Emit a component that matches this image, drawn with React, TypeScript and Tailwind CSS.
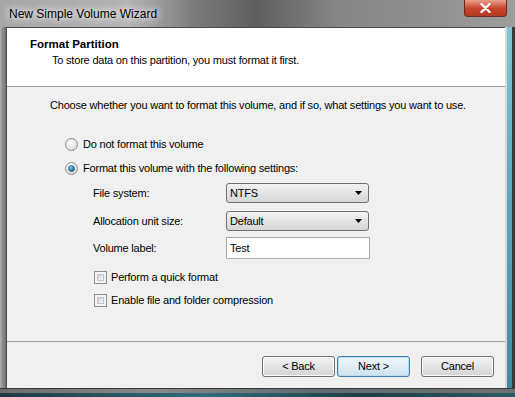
import React from 'react';

function Radio({ checked }: { checked?: boolean }) {
  return (
    <svg width="13" height="13" viewBox="0 0 13 13" className="shrink-0">
      <defs>
        <radialGradient id={checked ? 'rg1' : 'rg0'} cx="0.4" cy="0.35" r="0.7">
          <stop offset="0" stopColor="#ffffff" />
          <stop offset="1" stopColor="#d4d4d4" />
        </radialGradient>
        <radialGradient id="dot" cx="0.4" cy="0.35" r="0.7">
          <stop offset="0" stopColor="#8ad4f2" />
          <stop offset="0.6" stopColor="#2389be" />
          <stop offset="1" stopColor="#0d4f78" />
        </radialGradient>
      </defs>
      <circle cx="6.5" cy="6.5" r="6" fill={checked ? 'url(#rg1)' : 'url(#rg0)'} stroke="#8e8f8f" strokeWidth="1" />
      {checked && <circle cx="6.5" cy="6.5" r="3" fill="url(#dot)" stroke="#10476b" strokeWidth="0.5" />}
    </svg>
  );
}

function Checkbox() {
  return (
    <div className="w-[13px] h-[13px] shrink-0 border border-[#8f8f8f] bg-[#f4f4f4] p-[2px]">
      <div className="w-full h-full border border-[#c4c4c4] bg-gradient-to-br from-[#d2d2d2] to-[#f7f7f7]" />
    </div>
  );
}

function Select({ value }: { value: string }) {
  return (
    <div className="w-[143px] h-[20px] rounded-[3px] border border-[#707070] bg-gradient-to-b from-[#f2f2f2] to-[#d6d6d6] flex items-center justify-between pl-[3px] pr-[6px]">
      <span>{value}</span>
      <svg width="7" height="4" viewBox="0 0 7 4">
        <polygon points="0,0 7,0 3.5,4" fill="#000" />
      </svg>
    </div>
  );
}

function Button({ label, primary }: { label: string; primary?: boolean }) {
  return (
    <div
      className={
        'w-[73px] h-[21px] rounded-[3px] border flex items-center justify-center ' +
        (primary
          ? 'border-[#3c7fb1] bg-gradient-to-b from-[#f0f7fb] to-[#cfe2ee] shadow-[inset_0_0_0_1px_#b8dcf0]'
          : 'border-[#707070] bg-gradient-to-b from-[#f4f4f4] to-[#d4d4d4] shadow-[inset_0_0_0_1px_#fcfcfc]')
      }
    >
      {label}
    </div>
  );
}

export default function App() {
  return (
    <div
      className="w-[515px] h-[397px] flex flex-col text-[11px] tracking-[-0.2px] text-black overflow-hidden bg-[#7e7e7e]"
      style={{ fontFamily: '"Liberation Sans", Arial, sans-serif' }}
    >
      {/* title bar */}
      <div className="h-[27px] shrink-0 flex justify-between bg-[linear-gradient(90deg,#a6a6a6_0%,#b4b4b4_25%,#7a7a7a_38%,#5e5e5e_50%,#858585_65%,#8e8e8e_82%,#9d9d9d_100%)]">
        <div className="pl-[9px] pt-[5px] text-[12px] tracking-normal text-black [text-shadow:0_0_6px_#ffffff,0_0_10px_#ffffff]">
          New Simple Volume Wizard
        </div>
        <div className="mr-[8px] w-[43px] h-[17px] rounded-b-[4px] border border-t-0 border-[#6b2a20] bg-gradient-to-b from-[#e8a08c] via-[#c8452c] to-[#b53a22] flex items-center justify-center">
          <svg width="11" height="10" viewBox="0 0 11 10">
            <path d="M1.5 1 L9.5 9 M9.5 1 L1.5 9" stroke="#ffffff" strokeWidth="2.4" strokeLinecap="round" />
          </svg>
        </div>
      </div>

      <div className="flex flex-1 min-h-0">
        {/* left frame */}
        <div className="w-[7px] shrink-0 bg-[linear-gradient(90deg,#b2b2b2_0%,#8c8c8c_40%,#7a7a7a_75%,#3c3c3c_100%)]" />

        {/* client */}
        <div className="flex-1 flex flex-col bg-[#f0f0f0] border-t border-[#4a4a4a]">
          <div className="h-[59px] shrink-0 bg-white border-b border-[#a0a0a0] pt-[8px]">
            <div className="pl-[23px] font-bold text-[11.5px] tracking-normal leading-[16px]">Format Partition</div>
            <div className="pl-[45px] leading-[16px]">To store data on this partition, you must format it first.</div>
          </div>

          <div className="h-[255px] shrink-0 border-b border-[#a0a0a0] flex flex-col">
            <div className="mt-[10px] h-[16px] flex items-center pl-[43px] whitespace-nowrap">
              Choose whether you want to format this volume, and if so, what settings you want to use.
            </div>
            <div className="mt-[23px] h-[16px] flex items-center gap-[5px] pl-[58px]">
              <Radio />
              <span>Do not format this volume</span>
            </div>
            <div className="mt-[8px] h-[16px] flex items-center gap-[5px] pl-[58px]">
              <Radio checked />
              <span>Format this volume with the following settings:</span>
            </div>
            <div className="mt-[7px] h-[20px] flex items-center pl-[86px]">
              <span className="w-[133px]">File system:</span>
              <Select value="NTFS" />
            </div>
            <div className="mt-[8px] h-[20px] flex items-center pl-[86px]">
              <span className="w-[133px]">Allocation unit size:</span>
              <Select value="Default" />
            </div>
            <div className="mt-[6px] h-[22px] flex items-center pl-[86px]">
              <span className="w-[133px]">Volume label:</span>
              <div className="w-[144px] h-[22px] bg-white border border-[#abadb3] border-t-[#a4a9b0] flex items-center pl-[3px]">
                Test
              </div>
            </div>
            <div className="mt-[10px] h-[16px] flex items-center gap-[4px] pl-[87px]">
              <Checkbox />
              <span>Perform a quick format</span>
            </div>
            <div className="mt-[7px] h-[16px] flex items-center gap-[4px] pl-[87px]">
              <Checkbox />
              <span>Enable file and folder compression</span>
            </div>
          </div>

          <div className="flex-1 flex justify-end items-start pt-[14px] pr-[11px]">
            <Button label="< Back" />
            <div className="ml-[2px]">
              <Button label="Next >" primary />
            </div>
            <div className="ml-[11px]">
              <Button label="Cancel" />
            </div>
          </div>
        </div>

        {/* right frame */}
        <div className="w-[10px] shrink-0 flex">
          <div className="w-[2px] bg-[#d8d8d8]" />
          <div className="w-[5px] bg-gradient-to-b from-[#7fc4d4] via-[#5aa7bd] to-[#3f8aa0]" />
          <div className="w-[3px] bg-[#3a3a3a]" />
        </div>
      </div>

      {/* bottom frame */}
      <div className="h-[9px] shrink-0 flex flex-col">
        <div className="h-[1px] bg-[#3a3a3a]" />
        <div className="h-[4px] bg-[linear-gradient(90deg,#6b6b6b,#8a8a8a_30%,#5e6a6e_60%,#707070)]" />
        <div className="h-[4px] bg-[linear-gradient(90deg,#1f3a44,#2f6c7e_40%,#1e3d46_70%,#2b5b68)]" />
      </div>
    </div>
  );
}
